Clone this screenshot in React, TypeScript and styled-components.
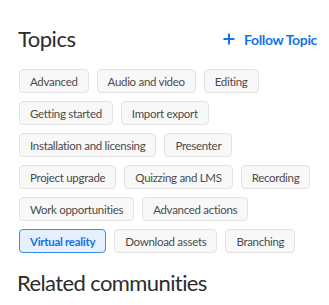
import React from "react";
import styled, { createGlobalStyle } from "styled-components";

const Global = createGlobalStyle`
  html, body { margin: 0; padding: 0; background: #ffffff; }
  body { font-family: Lato, "Noto Sans", sans-serif; -webkit-font-smoothing: antialiased; }
`;

const Panel = styled.section`
  width: 329px;
  box-sizing: border-box;
  padding: 25px 12px 0 18px;
`;

const Header = styled.div`
  display: flex;
  align-items: center;
  justify-content: space-between;
  height: 28px;
`;

const Title = styled.h2`
  margin: 0;
  font-size: 22px;
  line-height: 28px;
  font-weight: 400;
  letter-spacing: -0.5px;
  color: #2c2c2c;
`;

const FollowButton = styled.button`
  display: flex;
  align-items: center;
  gap: 9px;
  border: 0;
  background: none;
  padding: 0;
  font-family: inherit;
  font-size: 14px;
  font-weight: 700;
  color: #1473e6;
  cursor: pointer;
  letter-spacing: -0.35px;
`;

const Chips = styled.div`
  display: flex;
  flex-wrap: wrap;
  gap: 8px;
  margin-top: 16px;
  padding-left: 1px;
`;

const Chip = styled.span<{ $active?: boolean }>`
  box-sizing: border-box;
  height: 24px;
  display: inline-flex;
  align-items: center;
  padding: 0 10px;
  border-radius: 4px;
  font-size: 11.5px;
  letter-spacing: -0.3px;
  border: 1px solid ${(p) => (p.$active ? "#378ef0" : "#e3e3e3")};
  background: ${(p) => (p.$active ? "#e6f0fc" : "#f8f8f8")};
  color: ${(p) => (p.$active ? "#1473e6" : "#4b4b4b")};
  font-weight: ${(p) => (p.$active ? 700 : 400)};
  white-space: nowrap;
`;

const SubTitle = styled.h2`
  margin: 16px 0 0 -1px;
  font-size: 22px;
  line-height: 28px;
  font-weight: 400;
  letter-spacing: -0.6px;
  color: #2c2c2c;
`;

const topics = [
  "Advanced",
  "Audio and video",
  "Editing",
  "Getting started",
  "Import export",
  "Installation and licensing",
  "Presenter",
  "Project upgrade",
  "Quizzing and LMS",
  "Recording",
  "Work opportunities",
  "Advanced actions",
  "Virtual reality",
  "Download assets",
  "Branching",
];

const PlusIcon = () => (
  <svg width="12" height="12" viewBox="0 0 12 12">
    <path d="M6 0.5v11M0.5 6h11" stroke="#1473e6" strokeWidth="2" fill="none" />
  </svg>
);

export default function App() {
  return (
    <>
      <Global />
      <Panel>
        <Header>
          <Title>Topics</Title>
          <FollowButton>
            <PlusIcon />
            Follow Topic
          </FollowButton>
        </Header>
        <Chips>
          {topics.map((t) => (
            <Chip key={t} $active={t === "Virtual reality"}>
              {t}
            </Chip>
          ))}
        </Chips>
        <SubTitle>Related communities</SubTitle>
      </Panel>
    </>
  );
}
